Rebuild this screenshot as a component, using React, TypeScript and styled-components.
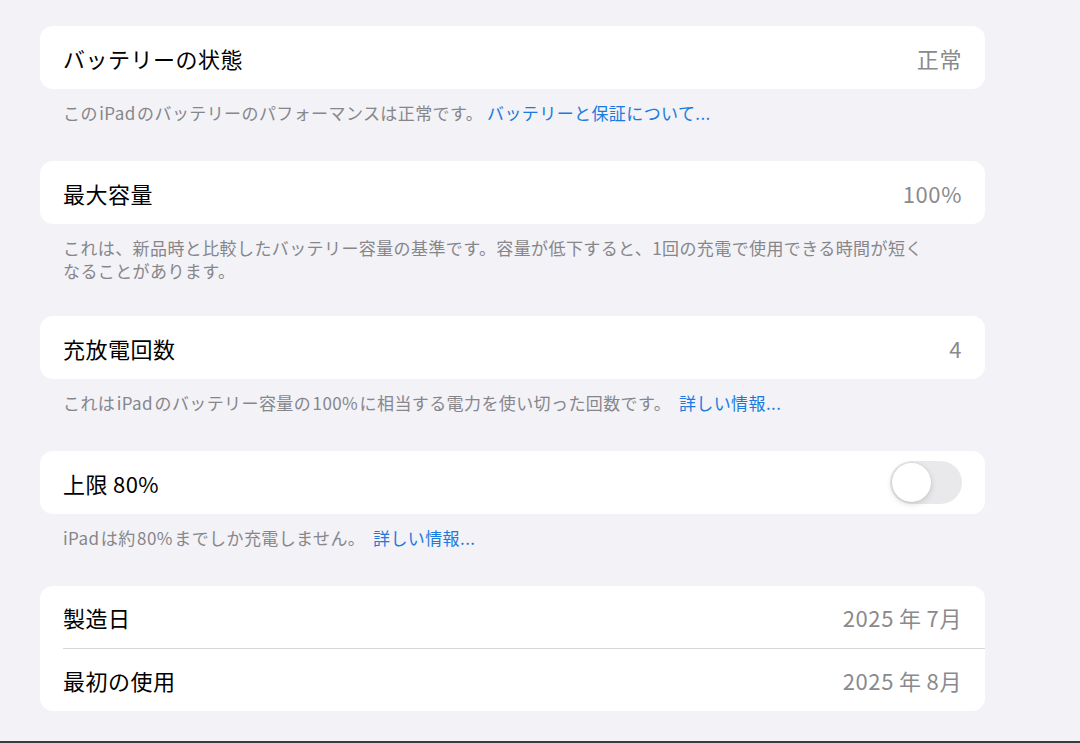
import React from "react";
import styled, { createGlobalStyle } from "styled-components";

const GlobalStyle = createGlobalStyle`
  html, body {
    margin: 0;
    padding: 0;
    background: #f2f2f7;
  }
  body {
    font-family: "Noto Sans CJK JP", "Noto Sans", sans-serif;
    -webkit-font-smoothing: antialiased;
  }
`;

// narrow gaps between latin/numbers and Japanese, as iOS renders them
const T = "\u2009";
const H = "\u200A";

const Page = styled.div`
  min-height: 100vh;
  display: flex;
  flex-direction: column;
  box-sizing: border-box;
  background: #f2f2f7;
`;

const Content = styled.div`
  flex: 1;
  width: 945px;
  padding: 26px 0 0 40px;
`;

const Section = styled.section`
  display: flex;
  flex-direction: column;
`;

const Card = styled.div`
  background: #ffffff;
  border-radius: 13px;
  overflow: hidden;
`;

const Row = styled.div<{ $divider?: boolean; $height?: number }>`
  position: relative;
  display: flex;
  align-items: center;
  justify-content: space-between;
  height: ${(p) => p.$height ?? 63}px;
  padding: 0 23px;
  box-sizing: border-box;
  ${(p) =>
    p.$divider &&
    `
    &::before {
      content: "";
      position: absolute;
      top: 0;
      left: 23px;
      right: 0;
      height: 1px;
      background: #d8d8dc;
    }
  `}
`;

const Label = styled.span`
  font-size: 22px;
  letter-spacing: 0.5px;
  color: #000000;
`;

const Value = styled.span`
  font-size: 22px;
  letter-spacing: 0.6px;
  color: #8a8a8e;
`;

const Footer = styled.p<{ $bottom?: number }>`
  margin: 0;
  padding: 12px 23px ${(p) => p.$bottom ?? 37}px;
  font-size: 17px;
  line-height: 23px;
  letter-spacing: 0.4px;
  color: #86868b;
`;

const Link = styled.span`
  color: #1b7ae0;
  margin-left: 4px;
`;

const Track = styled.div`
  width: 72px;
  height: 43px;
  border-radius: 22px;
  background: #e9e9eb;
  display: flex;
  align-items: center;
  padding: 0 2px;
  box-sizing: border-box;
`;

const Knob = styled.div`
  width: 39px;
  height: 39px;
  border-radius: 50%;
  background: #ffffff;
  box-shadow: 0 2px 6px rgba(0, 0, 0, 0.15), 0 0 0 0.5px rgba(0, 0, 0, 0.06);
`;

const BottomBar = styled.div`
  height: 2px;
  background: #3a3a3c;
`;

const Toggle: React.FC = () => (
  <Track>
    <Knob />
  </Track>
);

export default function App() {
  return (
    <>
      <GlobalStyle />
      <Page>
        <Content>
          <Section>
            <Card>
              <Row>
                <Label>バッテリーの状態</Label>
                <Value>正常</Value>
              </Row>
            </Card>
            <Footer>
              この{H}iPad{H}のバッテリーのパフォーマンスは正常です。
              <Link>バッテリーと保証について...</Link>
            </Footer>
          </Section>

          <Section>
            <Card>
              <Row>
                <Label>最大容量</Label>
                <Value>100%</Value>
              </Row>
            </Card>
            <Footer $bottom={34}>
              これは、新品時と比較したバッテリー容量の基準です。容量が低下すると、1回の充電で使用できる時間が短く
              <br />
              なることがあります。
            </Footer>
          </Section>

          <Section>
            <Card>
              <Row>
                <Label>充放電回数</Label>
                <Value>4</Value>
              </Row>
            </Card>
            <Footer>
              これは{H}iPad{H}のバッテリー容量の{H}100%{H}に相当する電力を使い切った回数です。
              <Link>{T}詳しい情報...</Link>
            </Footer>
          </Section>

          <Section>
            <Card>
              <Row>
                <Label>上限{T}80%</Label>
                <Toggle />
              </Row>
            </Card>
            <Footer>
              iPad{H}は約{H}80%{H}までしか充電しません。
              <Link>{T}詳しい情報...</Link>
            </Footer>
          </Section>

          <Section>
            <Card>
              <Row $height={62}>
                <Label>製造日</Label>
                <Value>2025{T}年{T}7月</Value>
              </Row>
              <Row $divider $height={63}>
                <Label>最初の使用</Label>
                <Value>2025{T}年{T}8月</Value>
              </Row>
            </Card>
          </Section>
        </Content>
        <BottomBar />
      </Page>
    </>
  );
}
